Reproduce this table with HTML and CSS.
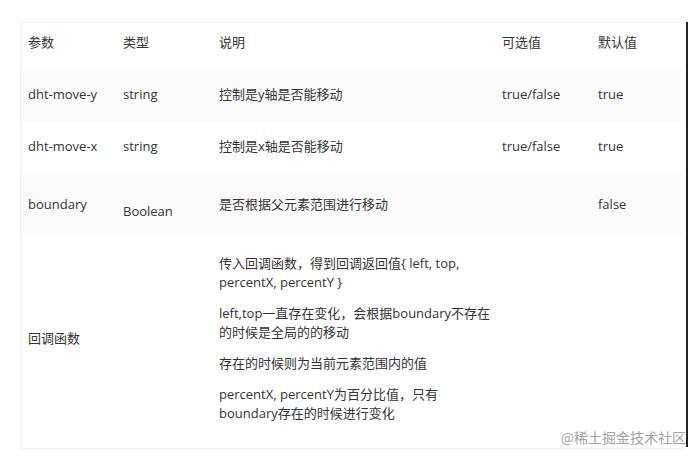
FILE: index.html
```html
<!DOCTYPE html>
<html lang="zh">
<head>
<meta charset="utf-8">
<link rel="stylesheet" href="styles.css">
</head>
<body>
<div class="frame">
  <table class="params">
    <thead>
      <tr class="head">
        <th class="c1">参数</th>
        <th class="c2">类型</th>
        <th class="c3">说明</th>
        <th class="c4">可选值</th>
        <th class="c5">默认值</th>
      </tr>
    </thead>
    <tbody>
      <tr class="r1 alt">
        <td>dht-move-y</td>
        <td>string</td>
        <td>控制是y轴是否能移动</td>
        <td>true/false</td>
        <td>true</td>
      </tr>
      <tr class="r2">
        <td>dht-move-x</td>
        <td>string</td>
        <td>控制是x轴是否能移动</td>
        <td>true/false</td>
        <td>true</td>
      </tr>
      <tr class="r3 alt">
        <td>boundary</td>
        <td class="low">Boolean</td>
        <td>是否根据父元素范围进行移动</td>
        <td></td>
        <td>false</td>
      </tr>
      <tr class="r4">
        <td>回调函数</td>
        <td></td>
        <td class="desc">
          <p>传入回调函数，得到回调返回值{ left, top, percentX, percentY }</p>
          <p>left,top一直存在变化，会根据boundary不存在的时候是全局的的移动</p>
          <p>存在的时候则为当前元素范围内的值</p>
          <p>percentX, percentY为百分比值，只有boundary存在的时候进行变化</p>
        </td>
        <td></td>
        <td></td>
      </tr>
    </tbody>
  </table>
</div>
<div class="watermark">@稀土掘金技术社区</div>
</body>
</html>
```

FILE: styles.css
```css
html, body {
  margin: 0;
  padding: 0;
  background: #ffffff;
}

body {
  width: 700px;
  height: 459px;
  overflow: hidden;
  position: relative;
  font-family: "Open Sans", "Noto Sans CJK SC", sans-serif;
  font-size: 13px;
  color: #333333;
}

.frame {
  margin: 22px 0 0 20px;
  width: 666px;
  border-right: 2px solid #222222;
  height: 425px;
}

.params {
  width: 664px;
  border-collapse: collapse;
  table-layout: fixed;
  border: 1px solid #f3f3f3;
  border-right: none;
}

.params th,
.params td {
  text-align: left;
  font-weight: normal;
  line-height: 19px;
  padding: 0 7px;
  vertical-align: middle;
}

.c1 { width: 81px; }
.c2 { width: 82px; }
.c3 { width: 276px; padding-right: 0 !important; }
.c4 { width: 82px; }
.c5 { width: 80px; }

.head th {
  padding-top: 10px;
  padding-bottom: 16px;
}

.alt { background: #fbfbfb; }

.r1 td { padding-top: 17px; padding-bottom: 17px; }
.r2 td { padding-top: 16px; padding-bottom: 16px; }
.r3 td { padding-top: 23px; padding-bottom: 23px; }
.r3 td.low { padding-top: 30px; padding-bottom: 16px; }

.r4 td { padding-top: 17px; padding-bottom: 25px; }
.r4 td.desc { padding-right: 0; }

.desc p {
  margin: 0 0 12px;
}
.desc p:last-child {
  margin-bottom: 0;
}

.watermark {
  position: absolute;
  right: 14px;
  top: 427px;
  font-family: "Noto Sans CJK SC", sans-serif;
  font-size: 14px;
  line-height: 20px;
  color: #a3a3a3;
  background: rgba(255, 255, 255, 0.6);
}
```
